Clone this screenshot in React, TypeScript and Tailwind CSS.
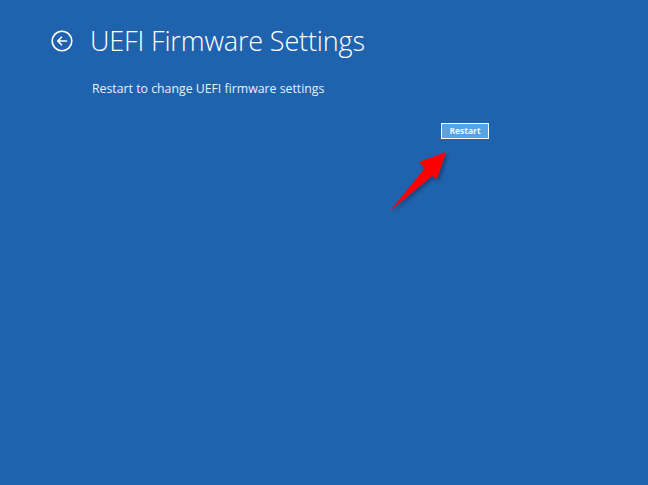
export default function App() {
  return (
    <div
      className="relative w-[648px] h-[485px] overflow-hidden bg-[#1f63ae] text-white"
      style={{ fontFamily: '"Open Sans", "Noto Sans", sans-serif' }}
    >
      {/* header */}
      <div className="flex items-center pt-[23px] pl-[51px]">
        <svg width="22" height="22" viewBox="0 0 22 22" className="shrink-0">
          <circle cx="11" cy="11" r="9.8" fill="none" stroke="white" strokeWidth="1.6" />
          <path d="M15.5 11H6.8M10.5 7.2L6.7 11l3.8 3.8" fill="none" stroke="white" strokeWidth="1.6" strokeLinecap="round" strokeLinejoin="round" />
        </svg>
        <h1 className="ml-[17px] text-[27px] leading-[36px] font-light tracking-[-0.15px]">UEFI Firmware Settings</h1>
      </div>

      <p className="mt-[21px] ml-[92px] text-[12.3px] leading-[18px] text-[#e8f0fa]">
        Restart to change UEFI firmware settings
      </p>

      <div className="flex justify-end pr-[159px] mt-[25px]">
        <button className="w-[48px] h-[16px] border border-white bg-[#56a3e3] text-[8.5px] font-bold leading-none text-[#eef5fc]">
          Restart
        </button>
      </div>

      {/* annotation arrow */}
      <svg className="absolute left-[380px] top-[140px]" width="80" height="80" viewBox="0 0 80 80">
        <defs>
          <filter id="sh" x="-30%" y="-30%" width="160%" height="160%">
            <feDropShadow dx="2" dy="2" stdDeviation="2" floodColor="#000" floodOpacity="0.35" />
          </filter>
        </defs>
        <polygon points="66,12 39,22 45,28 10,71 52,36 57,39" fill="#ff0000" filter="url(#sh)" />
      </svg>
    </div>
  );
}
